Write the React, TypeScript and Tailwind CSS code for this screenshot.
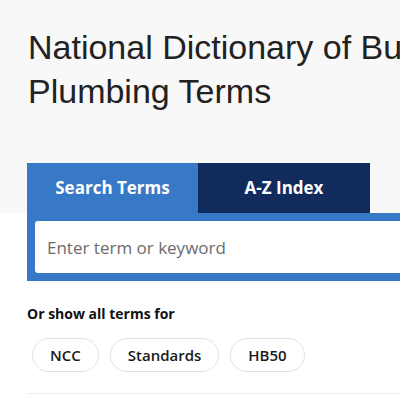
export default function App() {
  const filters = ["NCC", "Standards", "HB50"];

  return (
    <div className="w-[400px] h-[400px] overflow-hidden bg-white">
      <div className="w-[640px]">
        <section className="bg-[#f8f8f8] px-[27px] pt-[25px]">
          <h1 className="ml-px font-['Liberation_Sans',Arial,sans-serif] text-[34px] leading-[44px] font-normal text-[#222]">
            National Dictionary of Building and
            <br />
            Plumbing Terms
          </h1>
          <div className="mt-[50px] flex font-['Open_Sans',sans-serif] text-[17px] font-bold text-white">
            <button className="flex h-[50px] w-[171px] items-center justify-center bg-[#3779c6]">
              Search Terms
            </button>
            <button className="flex h-[50px] w-[172px] items-center justify-center bg-[#112c5c]">
              A-Z Index
            </button>
          </div>
        </section>

        <div className="px-[27px]">
          <div className="bg-[#3779c6] p-2">
            <input
              type="text"
              placeholder="Enter term or keyword"
              className="h-[52px] w-full rounded-[3px] bg-white px-3 font-['Open_Sans',sans-serif] text-[17px] text-[#333] placeholder:text-[#6b6b6b] outline-none"
            />
          </div>

          <p className="mt-[23px] font-['Open_Sans',sans-serif] text-[14px] leading-5 font-bold text-[#111]">
            Or show all terms for
          </p>
          <div className="mt-[14px] ml-[5px] flex gap-[11px] font-['Open_Sans',sans-serif]">
            {filters.map((f) => (
              <button
                key={f}
                className="h-[34px] rounded-full border border-[#e2e2e2] bg-white px-[17px] text-[15px] font-semibold text-[#1a1a1a]"
              >
                {f}
              </button>
            ))}
          </div>
          <div className="mt-[21px] border-t border-[#ececec]" />
        </div>
      </div>
    </div>
  );
}
